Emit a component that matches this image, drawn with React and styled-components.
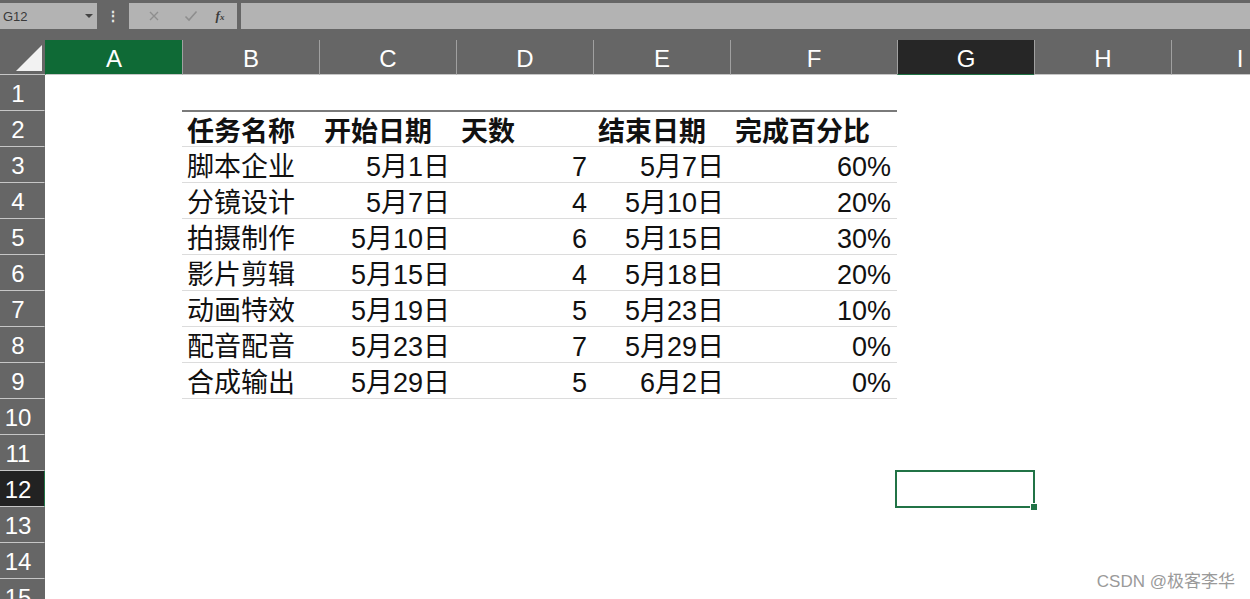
import React from "react";
import styled, { createGlobalStyle } from "styled-components";

const GlobalStyle = createGlobalStyle`
	html, body {
		margin: 0;
		padding: 0;
		background: #ffffff;
		overflow: hidden;
	}
	body {
		width: 1250px;
		height: 599px;
		font-family: "Liberation Sans", "Noto Sans CJK SC", sans-serif;
	}
`;

const columns = [
	{ name: "A", width: 137 },
	{ name: "B", width: 137 },
	{ name: "C", width: 137 },
	{ name: "D", width: 137 },
	{ name: "E", width: 137 },
	{ name: "F", width: 167 },
	{ name: "G", width: 137 },
	{ name: "H", width: 137 },
	{ name: "I", width: 137 },
];

const header = ["任务名称", "开始日期", "天数", "结束日期", "完成百分比"];

const tasks = [
	["脚本企业", "5月1日", "7", "5月7日", "60%"],
	["分镜设计", "5月7日", "4", "5月10日", "20%"],
	["拍摄制作", "5月10日", "6", "5月15日", "30%"],
	["影片剪辑", "5月15日", "4", "5月18日", "20%"],
	["动画特效", "5月19日", "5", "5月23日", "10%"],
	["配音配音", "5月23日", "7", "5月29日", "0%"],
	["合成输出", "5月29日", "5", "6月2日", "0%"],
];

const ROWS = 15;
const SEL_COL = 6;
const SEL_ROW = 12;
const ACTIVE_COL = 0;

export default function App() {
	const cellFor = (r, c) => {
		// table sits in rows 2..9, columns B..F
		if (r === 2 && c >= 1 && c <= 5) {
			return { text: header[c - 1], align: "left", bold: true, rule: "top" };
		}
		if (r >= 3 && r <= 9 && c >= 1 && c <= 5) {
			const v = tasks[r - 3][c - 1];
			return { text: v, align: c === 1 ? "left" : "right", rule: "line" };
		}
		return { text: "" };
	};

	return (
		<>
			<GlobalStyle />
			<Page>
				<Toolbar>
					<NameBox>
						<span>G12</span>
						<Caret />
					</NameBox>
					<Dots>⋮</Dots>
					<FuncButtons>
						<FuncIcon>
							<svg width="12" height="12" viewBox="0 0 12 12">
								<path d="M2 2 L10 10 M10 2 L2 10" stroke="#8e8e8e" strokeWidth="1.4" />
							</svg>
						</FuncIcon>
						<FuncIcon>
							<svg width="14" height="12" viewBox="0 0 14 12">
								<path d="M1.5 6.5 L5 10 L12.5 1.5" stroke="#8e8e8e" strokeWidth="1.6" fill="none" />
							</svg>
						</FuncIcon>
						<FxLabel>
							<i>f</i>
							<small>x</small>
						</FxLabel>
					</FuncButtons>
					<FormulaInput />
				</Toolbar>

				<Sheet $cols={columns.map((c) => `${c.width}px`).join(" ")}>
					<Corner>
						<svg width="30" height="30" viewBox="0 0 30 30">
							<polygon points="28,2 28,28 2,28" fill="#f2f2f2" />
						</svg>
					</Corner>
					{columns.map((col, i) => (
						<ColHeader
							key={col.name}
							$active={i === ACTIVE_COL}
							$selected={i === SEL_COL}>
							{col.name}
						</ColHeader>
					))}

					{Array.from({ length: ROWS }, (_, ri) => {
						const r = ri + 1;
						return (
							<React.Fragment key={r}>
								<RowHeader $selected={r === SEL_ROW}>{r}</RowHeader>
								{columns.map((col, c) => {
									const cell = cellFor(r, c);
									return (
										<Cell
											key={col.name}
											$align={cell.align}
											$bold={cell.bold}
											$rule={cell.rule}>
											{cell.text}
											{r === SEL_ROW && c === SEL_COL && (
												<Selection>
													<Handle />
												</Selection>
											)}
										</Cell>
									);
								})}
							</React.Fragment>
						);
					})}
				</Sheet>

				<Watermark>CSDN @极客李华</Watermark>
			</Page>
		</>
	);
}

const Page = styled.div`
	position: relative;
	width: 1250px;
	height: 599px;
	overflow: hidden;
	background: #ffffff;
`;

const Toolbar = styled.div`
	display: flex;
	align-items: flex-start;
	height: 40px;
	padding-top: 3px;
	box-sizing: border-box;
	background: #666666;
`;

const NameBox = styled.div`
	display: flex;
	align-items: center;
	justify-content: space-between;
	width: 97px;
	height: 26px;
	padding: 0 4px 0 3px;
	box-sizing: border-box;
	background: #b3b3b3;
	font-family: "Liberation Sans", sans-serif;
	font-size: 13px;
	color: #3a3a3a;
`;

const Caret = styled.span`
	width: 0;
	height: 0;
	border-left: 4px solid transparent;
	border-right: 4px solid transparent;
	border-top: 4px solid #444;
`;

const Dots = styled.div`
	width: 32px;
	height: 26px;
	display: flex;
	align-items: center;
	justify-content: center;
	color: #e8e8e8;
	font-size: 14px;
	font-weight: 700;
`;

const FuncButtons = styled.div`
	display: flex;
	align-items: center;
	justify-content: space-around;
	width: 108px;
	height: 26px;
	background: #b3b3b3;
	padding: 0 6px;
	box-sizing: border-box;
`;

const FuncIcon = styled.span`
	display: flex;
	align-items: center;
	justify-content: center;
	width: 24px;
`;

const FxLabel = styled.span`
	font-family: "Liberation Serif", serif;
	font-size: 13px;
	color: #3c3c3c;
	font-weight: 700;
	i {
		font-style: italic;
	}
	small {
		font-size: 9px;
		font-style: italic;
	}
`;

const FormulaInput = styled.div`
	flex: 1;
	height: 26px;
	margin-left: 4px;
	background: #b3b3b3;
`;

const Sheet = styled.div`
	display: grid;
	grid-template-columns: 45px ${(p) => p.$cols};
	grid-auto-rows: 36px;
	grid-template-rows: 35px;
	background: #ffffff;
`;

const Corner = styled.div`
	background: #666666;
	display: flex;
	align-items: flex-end;
	justify-content: flex-end;
	padding: 0 1px 1px 0;
	border-bottom: 1px solid #c6c6c6;
	box-sizing: border-box;
`;

const ColHeader = styled.div`
	display: flex;
	align-items: center;
	justify-content: center;
	padding-top: 4px;
	box-sizing: border-box;
	background: ${(p) => (p.$active ? "#0f6a36" : p.$selected ? "#262626" : "#666666")};
	border-left: 1px solid ${(p) => (p.$active ? "#0f6a36" : "#a0a0a0")};
	border-bottom: 1px solid ${(p) => (p.$selected ? "#217346" : "#c6c6c6")};
	color: #ffffff;
	font-family: "Liberation Sans", sans-serif;
	font-size: 24px;
`;

const RowHeader = styled.div`
	display: flex;
	align-items: center;
	justify-content: center;
	padding: 3px 8px 0 0;
	box-sizing: border-box;
	background: ${(p) => (p.$selected ? "#222222" : "#666666")};
	border-bottom: 1px solid #c6c6c6;
	border-right: 1px solid ${(p) => (p.$selected ? "#217346" : "#666666")};
	color: #ffffff;
	font-family: "Liberation Sans", sans-serif;
	font-size: 24px;
`;

const Cell = styled.div`
	position: relative;
	display: flex;
	align-items: center;
	justify-content: ${(p) => (p.$align === "right" ? "flex-end" : "flex-start")};
	padding: 6px 6px 0 5px;
	box-sizing: border-box;
	white-space: nowrap;
	font-family: "Liberation Sans", "Noto Sans CJK SC", sans-serif;
	font-size: 27px;
	line-height: 1;
	font-weight: ${(p) => (p.$bold ? 700 : 400)};
	color: #111111;
	border-top: ${(p) => (p.$rule === "top" ? "2px solid #7a7a7a" : "0")};
	border-bottom: ${(p) => (p.$rule ? "1px solid #dcdcdc" : "0")};
	${(p) => (p.$rule === "top" ? "margin-top: -1px;" : "")}
`;

const Selection = styled.div`
	position: absolute;
	left: -2px;
	top: -1px;
	right: -1px;
	bottom: -1px;
	border: 2px solid #217346;
	pointer-events: none;
`;

const Handle = styled.span`
	position: absolute;
	right: -5px;
	bottom: -5px;
	width: 6px;
	height: 6px;
	background: #217346;
	border: 1px solid #ffffff;
`;

const Watermark = styled.div`
	position: absolute;
	right: 15px;
	bottom: 7px;
	font-family: "Liberation Sans", "Noto Sans CJK SC", sans-serif;
	font-size: 17px;
	color: #9a9a9a;
`;
